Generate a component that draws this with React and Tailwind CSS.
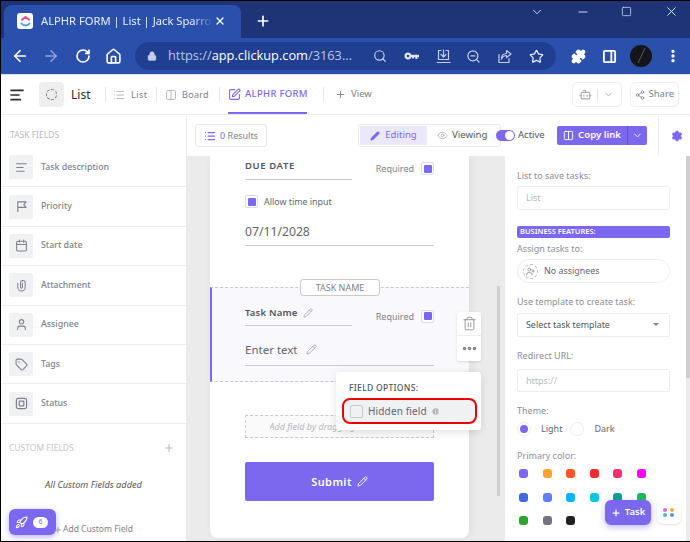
import React from 'react';
import {
  AlignLeft, ArrowLeft, ArrowRight, Calendar, ChevronDown, Columns2, Ellipsis, EllipsisVertical, Eye, Info,
  List, Lock, Minus, Pencil, Plus, Puzzle, RotateCw, Rocket, Search, Settings,
  Share2, Square, SquarePen, Star, Tag, Trash2, User, UserPlus, X, ZoomOut, Bot, House, PanelRight,
} from 'lucide-react';

function FlagIcon(props) {
  return (
    <svg {...props} viewBox="0 0 14 14" fill="none" stroke="currentColor" strokeWidth="1.2" strokeLinejoin="round">
      <path d="M3 13V2h9L9.5 5 12 8H3" />
    </svg>
  );
}

function ClipIcon(props) {
  return (
    <svg {...props} viewBox="0 0 14 14" fill="none" stroke="currentColor" strokeWidth="1.1" strokeLinecap="round">
      <path d="M3 4.5V9a4 4 0 0 0 8 0V4a2.5 2.5 0 0 0-5 0v5a1 1 0 0 0 2 0V4.5" />
    </svg>
  );
}

function StatusIcon(props) {
  return (
    <svg {...props} viewBox="0 0 14 14" fill="none" stroke="currentColor" strokeWidth="1.3">
      <rect x="1.5" y="1.5" width="11" height="11" rx="2" />
      <rect x="4.5" y="4.5" width="5" height="5" rx="0.5" />
    </svg>
  );
}

const taskFields = [
  { name: 'Task description', icon: AlignLeft },
  { name: 'Priority', icon: FlagIcon },
  { name: 'Start date', icon: Calendar },
  { name: 'Attachment', icon: ClipIcon },
  { name: 'Assignee', icon: User },
  { name: 'Tags', icon: Tag },
  { name: 'Status', icon: StatusIcon },
];

const swatches = [
  ['bg-[#7b68ee]', 'bg-[#ffa12f]', 'bg-[#ff5722]', 'bg-[#f42c2c]', 'bg-[#f8306d]', 'bg-[#ff00fc]'],
  ['bg-[#4169e1]', 'bg-[#5f81ff]', 'bg-[#0ab4ff]', 'bg-[#08c7e0]', 'bg-[#07a092]', 'bg-[#1db954]'],
  ['bg-[#2ea52c]', 'bg-[#757380]', 'bg-[#202020]'],
];

function Checkbox({ checked }) {
  return (
    <span className="flex h-[13px] w-[13px] items-center justify-center rounded-[2px] border border-[#dcdce6] bg-white">
      {checked && <span className="h-[8px] w-[8px] rounded-[1px] bg-[#7b68ee]" />}
    </span>
  );
}

function BrowserChrome() {
  return (
    <>
      <div className="flex h-[37px] items-end bg-[#1e3476] pl-[3px]">
        <div className="flex h-[33px] w-[237px] items-center rounded-t-lg bg-[#2b50ac] pl-[13px] pb-[1px] text-white">
          <span className="flex h-[16px] w-[16px] items-center justify-center rounded-[3px] bg-white">
            <svg width="11" height="12" viewBox="0 0 11 12" fill="none" strokeWidth="2" strokeLinecap="round">
              <path d="M1.5 8.5 C3.5 11 7.5 11 9.5 8.5" stroke="#4a9bf0" />
              <path d="M2 4.8 L5.5 2 L9 4.8" stroke="#f0468c" />
            </svg>
          </span>
          <span className="ml-[8px] w-[172px] overflow-hidden whitespace-nowrap text-[11.2px] text-[#e8edf8] [mask-image:linear-gradient(to_right,black_88%,transparent)]">ALPHR FORM | List | Jack Sparrow</span>
          <X size={12} strokeWidth={2.5} className="ml-[1px]" />
        </div>
        <Plus size={16} strokeWidth={2.5} className="mb-[9px] ml-[14px] text-white" />
        <div className="mb-[19px] ml-auto flex items-center pr-[11px] text-[#e8edf8]">
          <ChevronDown size={14} strokeWidth={1.5} />
          <Minus size={14} strokeWidth={1.5} className="ml-[32px]" />
          <Square size={11} strokeWidth={1.5} className="ml-[31px]" />
          <X size={15} strokeWidth={1.5} className="ml-[32px]" />
        </div>
      </div>
      <div className="flex h-[37px] items-center border-b border-[#d8dff0] bg-[#2b50ac] pl-[10px] text-white">
        <ArrowLeft size={18} strokeWidth={2.25} />
        <ArrowRight size={18} strokeWidth={2} className="ml-[13px] text-[#8ea3d8]" />
        <RotateCw size={16} strokeWidth={2.5} className="ml-[15px]" />
        <House size={17} strokeWidth={2.25} className="ml-[14px]" />
        <div className="ml-[13px] flex h-[28px] w-[421px] items-center rounded-full bg-[#213f90] pl-[12px] text-[#c5cfe8]">
          <Lock size={10} fill="#c5cfe8" />
          <span className="ml-[11px] w-[190px] whitespace-nowrap font-['Open_Sans',sans-serif] text-[12.8px] text-[#b9c6e6]">
            https://<span className="text-white">app.clickup.com</span>/3163...
          </span>
          <Search size={14} className="ml-[15px]" />
          <svg width="15" height="14" viewBox="0 0 15 14" className="ml-[17px] text-[#dfe5f4]" fill="currentColor">
            <path d="M4 3.5a3.5 3.5 0 0 1 3.3 2.3H15v2.4h-1.6V10h-2V8.2H9.8V9.4H8V8.2h-.7A3.5 3.5 0 1 1 4 3.5Zm0 2.2a1.3 1.3 0 1 0 0 2.6 1.3 1.3 0 0 0 0-2.6Z" />
          </svg>
          <svg width="15" height="15" viewBox="0 0 15 15" className="ml-[17px]" fill="none" stroke="currentColor" strokeWidth="1.2" strokeLinecap="round" strokeLinejoin="round">
            <path d="M5 1.5H2.5v9h10v-9H10" />
            <path d="M7.5 1v6.5M5 5.5l2.5 2.5L10 5.5" />
            <path d="M1 13.5h13" />
          </svg>
          <ZoomOut size={15} className="ml-[15px]" />
          <svg width="15" height="15" viewBox="0 0 15 15" className="ml-[16px]" fill="none" stroke="currentColor" strokeWidth="1.2" strokeLinecap="round" strokeLinejoin="round">
            <path d="M2 5.5v8h10V9.5" />
            <path d="M9.5 1.5L14 5l-4.5 3.5V6.5C7 6.5 5.5 7.5 4.5 10c0-3.5 2-5.5 5-5.5Z" />
          </svg>
          <Star size={15} strokeWidth={2} className="ml-[17px] text-[#e8edf8]" />
        </div>
        <Puzzle size={15} fill="white" className="ml-[15px]" />
        <PanelRight size={15} strokeWidth={3} className="ml-[16px]" />
        <svg width="22" height="22" viewBox="0 0 22 22" className="ml-[13px]">
          <circle cx="11" cy="11" r="11" fill="#14141a" />
          <path d="M15 3L8 18" stroke="#6a6a70" strokeWidth="0.8" />
        </svg>
        <EllipsisVertical size={16} strokeWidth={3} className="ml-[13px]" />
      </div>
    </>
  );
}

function AppHeader() {
  return (
    <div className="flex h-[40px] items-center border-b border-[#eceef2] bg-white pl-[8px] text-[#7c828d]">
      <AlignLeft size={16} strokeWidth={2.5} className="text-[#2a2e34]" />
      <span className="ml-[14px] flex h-[25px] w-[25px] items-center justify-center rounded-[4px] bg-[#eeeeee]">
        <span className="h-[11px] w-[11px] rounded-full border border-dashed border-[#777]" />
      </span>
      <span className="ml-[7px] w-[34px] text-[12px] text-[#2a2e34]">List</span>
      <span className="h-[15px] w-px bg-[#e6e8ec]" />
      <List size={12} className="ml-[7px] text-[#b5b8c0]" />
      <span className="ml-[6px] w-[25px] text-[9px] tracking-[0.5px]">List</span>
      <span className="h-[15px] w-px bg-[#e6e8ec]" />
      <Columns2 size={12} className="ml-[8px] text-[#b5b8c0]" />
      <span className="ml-[5px] w-[37px] text-[9px] tracking-[0.3px]">Board</span>
      <span className="h-[15px] w-px bg-[#e6e8ec]" />
      <div className="relative ml-[8px] flex h-full w-[95px] items-center text-[#7b68ee]">
        <SquarePen size={13} />
        <span className="ml-[4px] whitespace-nowrap text-[9.5px] font-medium tracking-[0.3px]">ALPHR FORM</span>
        <span className="absolute bottom-0 left-0 h-[2px] w-[79px] bg-[#7b68ee]" />
      </div>
      <span className="h-[15px] w-px bg-[#e6e8ec]" />
      <Plus size={11} className="ml-[11px]" />
      <span className="ml-[5px] text-[9.5px]">View</span>
      <div className="ml-[200px] flex h-[25px] w-[50px] items-center justify-center rounded-[5px] border border-[#eceef2]">
        <Bot size={13} className="text-[#a5a8b0]" />
        <span className="mx-[5px] h-[12px] w-px bg-[#e6e8ec]" />
        <ChevronDown size={11} className="text-[#a5a8b0]" />
      </div>
      <div className="ml-[8px] flex h-[25px] w-[49px] items-center justify-center rounded-[5px] border border-[#eceef2] text-[9.5px]">
        <Share2 size={10} className="mr-[4px]" />
        Share
      </div>
    </div>
  );
}

function SubHeader() {
  return (
    <div className="flex h-[41px] items-center bg-white">
      <div className="flex h-full w-[186px] items-center border-r border-[#eceef2] pl-[9px] text-[8.5px] text-[#b5b8c0]">TASK FIELDS</div>
      <div className="ml-[8px] flex h-[23px] w-[72px] items-center justify-center rounded-[3px] border border-[#e6e8ec] text-[9px] text-[#7c828d]">
        <List size={12} strokeWidth={2.5} className="mr-[4px] text-[#7b68ee]" />
        <span className="text-[#7b68ee]">0</span>&nbsp;Results
      </div>
      <div className="ml-[91px] flex h-[23px] w-[143px] items-center rounded-[3px] border border-[#e6e8ec] p-[1px] text-[9.6px]">
        <span className="flex h-full w-[67px] items-center justify-center bg-[#ebe8fb] text-[#7b68ee]">
          <Pencil size={10} fill="#7b68ee" className="mr-[5px]" />
          Editing
        </span>
        <Eye size={11} className="ml-[10px] text-[#b5b8c0]" />
        <span className="ml-[4px] text-[#4f5660]">Viewing</span>
      </div>
      <span className="relative ml-[-5px] h-[11px] w-[19px] rounded-full bg-[#7b68ee]">
        <span className="absolute right-[1px] top-[1px] h-[9px] w-[9px] rounded-full bg-white" />
      </span>
      <span className="ml-[3px] w-[27px] whitespace-nowrap text-[9.5px] text-[#4f5660]">Active</span>
      <div className="ml-[12px] flex h-[19px] w-[90px] items-center rounded-[2px] bg-[#7b68ee] text-[9.6px] font-semibold text-white">
        <span className="flex h-full w-[71px] items-center justify-center border-r border-[#5f4fc4]">
          <Columns2 size={11} className="mr-[4px]" />
          Copy link
        </span>
        <ChevronDown size={11} className="ml-[4px]" />
      </div>
      <span className="ml-[11px] h-full w-px bg-[#eceef2]" />
      <Settings size={12} fill="#7b68ee" className="ml-[12px] text-[#7b68ee]" />
    </div>
  );
}

function Sidebar() {
  return (
    <div className="relative w-[185px] shrink-0 bg-white">
      <div className="mt-[-8px]">
        {taskFields.map(({ name, icon: Icon }) => (
          <div key={name} className="flex h-[39.4px] items-center border-b border-[#eceef2] pl-[8px] text-[8.8px] font-medium text-[#7c828d]">
            <span className="flex h-[24px] w-[24px] items-center justify-center rounded-[2px] bg-[#f0f1f3]">
              <Icon width={13} height={13} className="text-[#7c828d]" />
            </span>
            <span className="ml-[8px]">{name}</span>
          </div>
        ))}
      </div>
      <div className="mt-[18px] flex items-center justify-between pl-[8px] pr-[11px] text-[8.5px] text-[#c5c8ce]">
        CUSTOM FIELDS
        <Plus size={12} className="text-[#b5b8c0]" />
      </div>
      <div className="mt-[24px] text-center text-[9.2px] italic text-[#555]">All Custom Fields added</div>
      <div className="mt-[31px] flex items-center pl-[53px] text-[8.5px] text-[#7c828d]">
        <Plus size={8} />
        <span className="ml-[1px]">Add Custom Field</span>
      </div>
      <div className="absolute bottom-[6px] left-[8px] flex h-[26px] w-[47px] items-center gap-[5px] rounded-md bg-[#7b68ee] pl-[6px] shadow-[0_2px_6px_rgba(123,104,238,0.5)]">
        <Rocket size={13} className="text-white" />
        <span className="flex h-[11px] w-[15px] items-center justify-center rounded-full bg-white text-[7px] text-[#7b68ee]">6</span>
      </div>
    </div>
  );
}

function FormCard() {
  return (
    <div className="relative ml-[24px] h-[382px] w-[259px] rounded-b-lg bg-white shadow-[2px_0_8px_rgba(0,0,0,0.06)]">
      <div className="px-[35px]">
        <div className="flex items-center justify-between pt-[3px]">
          <div className="h-[21px] w-[107px] border-b border-[#c8cad0] text-[9.5px] font-semibold tracking-[0.6px] text-[#4f5660]">DUE DATE</div>
          <div className="mb-[2px] flex items-center gap-[7px] text-[9px] text-[#7c828d]">
            Required
            <Checkbox checked />
          </div>
        </div>
        <div className="mt-[15px] flex items-center gap-[6px] text-[8.9px] text-[#5f6670]">
          <Checkbox checked />
          Allow time input
        </div>
        <div className="mt-[15px] h-[23px] border-b border-[#c8cad0] text-[12.2px] text-[#5f6670]">07/11/2028</div>
      </div>

      <div className="relative mt-[41px] h-[95px] border-y border-l-2 border-dashed border-[#c8cad0] border-l-[#7b68ee] bg-[#f9f9fd] pl-[33px] pr-[35px] [border-left-style:solid]">
        <span className="absolute left-[88px] top-[-9px] flex h-[17px] w-[80px] items-center justify-center rounded-[3px] border border-[#c8cad0] bg-white text-[9px] text-[#7c828d]">TASK NAME</span>
        <div className="flex items-center justify-between pt-[18px]">
          <div className="flex h-[20px] w-[107px] items-start gap-[5px] border-b border-[#c8cad0] text-[9.5px] font-semibold tracking-[0.2px] text-[#4f5660]">
            Task Name
            <Pencil size={10} className="mt-[2px] text-[#a5a8b0]" />
          </div>
          <div className="flex items-center gap-[7px] text-[9px] text-[#7c828d]">
            Required
            <Checkbox checked />
          </div>
        </div>
        <div className="mt-[15px] flex h-[25px] items-start gap-[8px] border-b border-[#c8cad0] text-[11.5px] text-[#5f6670]">
          Enter text
          <Pencil size={11} className="mt-[3px] text-[#a5a8b0]" />
        </div>
      </div>

      <div className="mx-[35px] mt-[33px] flex h-[23px] items-center justify-center border border-dashed border-[#c8cad0] bg-[#fafafa] pr-[20px] text-[9px] italic text-[#b5b8c0]">
        <span className="w-[120px] overflow-hidden whitespace-nowrap">Add field by dragging</span>
      </div>
      <div className="mx-[35px] mt-[24px] flex h-[39px] items-center justify-center gap-[5px] rounded-[2px] bg-[#7b68ee] text-[11px] font-semibold tracking-[0.4px] text-white">
        Submit
        <Pencil size={11} />
      </div>

      <div className="absolute left-[247px] top-[156px] w-[24px] rounded-[2px] bg-white shadow-sm">
        <div className="flex h-[24px] items-center justify-center border-b border-[#eceef2]">
          <Trash2 size={15} strokeWidth={1.25} className="text-[#7c828d]" />
        </div>
        <div className="flex h-[25px] items-center justify-center">
          <Ellipsis size={17} strokeWidth={3} className="text-[#7c828d]" />
        </div>
      </div>

      <div className="absolute left-[126px] top-[216px] h-[58px] w-[145px] rounded-[3px] bg-white pl-[6px] pr-[4px] pt-[10px] shadow-[0_2px_8px_rgba(0,0,0,0.12)]">
        <div className="pl-[7px] text-[8.5px] font-medium leading-[12px] tracking-[0.3px] text-[#4f5660]">FIELD OPTIONS:</div>
        <div className="mt-[4px] flex h-[26px] items-center rounded-lg border-2 border-[#ee0000] bg-[#f0f1f3] pl-[6px] text-[10px] text-[#5f6670]">
          <span className="h-[13px] w-[13px] rounded-[2px] border border-[#c8cad0]" />
          <span className="ml-[5px] tracking-[0.15px]">Hidden field</span>
          <Info size={9} fill="#b5b8c0" className="ml-[4px] text-white" />
        </div>
      </div>
    </div>
  );
}

function FieldLabel({ children, className }) {
  return <div className={`text-[9px] text-[#8a8f98] ${className}`}>{children}</div>;
}

function SettingsPanel() {
  return (
    <div className="relative w-[181px] shrink-0 bg-white pl-[12px] pr-[16px] pt-[13px]">
      <FieldLabel>List to save tasks:</FieldLabel>
      <div className="mt-[3px] flex h-[24px] items-center rounded-[2px] border border-[#f0f1f3] pl-[8px] text-[9px] text-[#b5b8c0]">List</div>
      <div className="mt-[16px] flex h-[12px] items-center rounded-[2px] bg-[#7b68ee] pl-[3px] text-[7.5px] font-semibold text-white">BUSINESS FEATURES:</div>
      <FieldLabel className="mt-[4px]">Assign tasks to:</FieldLabel>
      <div className="mt-[4px] flex h-[24px] items-center rounded-full border border-[#eceef2] pl-[5px] text-[8.9px] text-[#5f6670]">
        <span className="flex h-[15px] w-[15px] items-center justify-center rounded-full border border-dashed border-[#b5b8c0]">
          <UserPlus size={9} className="text-[#7c828d]" />
        </span>
        <span className="ml-[6px]">No assignees</span>
      </div>
      <FieldLabel className="mt-[12px]">Use template to create task:</FieldLabel>
      <div className="mt-[4px] flex h-[24px] items-center justify-between rounded-[2px] border border-[#eceef2] pl-[8px] pr-[10px] text-[8.9px] text-[#4f5660]">
        Select task template
        <span className="h-0 w-0 border-x-[3px] border-t-[3px] border-x-transparent border-t-[#7c828d]" />
      </div>
      <FieldLabel className="mt-[12px]">Redirect URL:</FieldLabel>
      <div className="mt-[7px] flex h-[23px] items-center rounded-[2px] border border-[#eceef2] pl-[8px] text-[9px] text-[#b5b8c0]">https://</div>
      <FieldLabel className="mt-[12px]">Theme:</FieldLabel>
      <div className="mt-[4px] flex items-center text-[9px] text-[#5f6670]">
        <span className="flex h-[14px] w-[14px] items-center justify-center rounded-full border border-[#eceef2]">
          <span className="h-[8px] w-[8px] rounded-full bg-[#7b68ee]" />
        </span>
        <span className="ml-[10px]">Light</span>
        <span className="ml-[8px] h-[14px] w-[14px] rounded-full border border-[#eceef2]" />
        <span className="ml-[10px]">Dark</span>
      </div>
      <FieldLabel className="mt-[13px]">Primary color:</FieldLabel>
      <div className="mt-[7px] flex flex-col gap-[14.5px] pl-[2px]">
        {swatches.map((row, i) => (
          <div key={i} className="flex gap-[14.5px]">
            {row.map(c => <span key={c} className={`h-[9px] w-[9px] rounded-[3px] ${c}`} />)}
          </div>
        ))}
      </div>
    </div>
  );
}

export default function App() {
  return (
    <div className="relative h-[542px] w-[690px] overflow-hidden bg-black pb-[2px] pl-[1px] pt-[1px] font-['Noto_Sans',sans-serif]">
      <BrowserChrome />
      <AppHeader />
      <SubHeader />
      <div className="flex h-[385px] bg-[#ebebeb]">
        <Sidebar />
        <div className="relative w-[319px] shrink-0 overflow-hidden">
          <FormCard />
          <span className="absolute left-[311px] top-[130px] h-[210px] w-[3px] bg-[#cfcfcf]" />
        </div>
        <SettingsPanel />
        <span className="h-[222px] w-[4px] bg-[#cfcfcf]" />
      </div>
      <div className="absolute left-[605px] top-[500px] flex h-[25px] w-[46px] items-center justify-center gap-[4px] rounded-md bg-[#7b68ee] text-[9.5px] font-semibold text-white shadow-[0_2px_6px_rgba(123,104,238,0.5)]">
        <Plus size={10} strokeWidth={3} />
        Task
      </div>
      <div className="absolute left-[657px] top-[500px] grid h-[24px] w-[24px] grid-cols-2 place-content-center gap-[1px] rounded-md bg-white p-[6px] shadow">
        <span className="h-[4px] w-[4px] rounded-full bg-[#e86fc0]" />
        <span className="h-[4px] w-[4px] rounded-full bg-[#f5b13d]" />
        <span className="h-[4px] w-[4px] rounded-full bg-[#4fb8c4]" />
        <span className="h-[4px] w-[4px] rounded-full bg-[#4f9ad8]" />
      </div>
    </div>
  );
}
